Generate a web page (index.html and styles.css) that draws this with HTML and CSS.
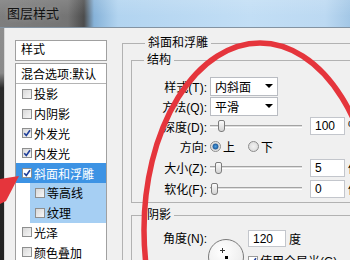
FILE: index.html
```html
<!DOCTYPE html>
<html lang="zh-CN">
<head>
    <meta charset="UTF-8">
    <title>图层样式</title>
    <link rel="stylesheet" href="styles.css">
</head>
<body>
<div class="window">
    <div class="titlebar"><span class="title">图层样式</span></div>
    <div class="frame">
        <div class="frame-edge"></div>
        <div class="dialog">
            <!-- left list of effects -->
            <div class="styles-panel">
                <div class="panel-head">样式</div>
                <ul class="style-list">
                    <li class="blend">混合选项:默认</li>
                    <li><span class="check"></span>投影</li>
                    <li><span class="check"></span>内阴影</li>
                    <li><span class="check"><svg viewBox="0 0 8 8"><path d="M1.2 4.2 L3.3 6.4 L7 1.2"/></svg></span>外发光</li>
                    <li><span class="check"><svg viewBox="0 0 8 8"><path d="M1.2 4.2 L3.3 6.4 L7 1.2"/></svg></span>内发光</li>
                    <li class="selected"><span class="check"><svg viewBox="0 0 8 8"><path d="M1.2 4.2 L3.3 6.4 L7 1.2"/></svg></span>斜面和浮雕</li>
                    <li class="sub"><span class="check"></span>等高线</li>
                    <li class="sub"><span class="check"></span>纹理</li>
                    <li><span class="check"></span>光泽</li>
                    <li><span class="check"></span>颜色叠加</li>
                </ul>
            </div>

            <!-- bevel and emboss options -->
            <div class="options">
                <fieldset class="group outer">
                    <legend>斜面和浮雕</legend>
                    <fieldset class="group inner">
                        <legend>结构</legend>
                        <div class="form-grid">
                            <label>样式(T):</label>
                            <div class="dropdown"><span>内斜面</span><span class="arrow"></span></div>

                            <label>方法(Q):</label>
                            <div class="dropdown"><span>平滑</span><span class="arrow"></span></div>

                            <label>深度(D):</label>
                            <div class="control">
                                <div class="slider"><div class="track"></div><div class="thumb" style="left: 8px"></div></div>
                                <div class="num">100</div><span class="unit">%</span>
                            </div>

                            <label>方向:</label>
                            <div class="control">
                                <span class="radio on"></span><span class="radio-text">上</span>
                                <span class="radio second"></span><span class="radio-text">下</span>
                            </div>

                            <label>大小(Z):</label>
                            <div class="control">
                                <div class="slider"><div class="track"></div><div class="thumb" style="left: 5px"></div></div>
                                <div class="num">5</div><span class="unit">像素</span>
                            </div>

                            <label>软化(F):</label>
                            <div class="control">
                                <div class="slider"><div class="track"></div><div class="thumb" style="left: 1px"></div></div>
                                <div class="num">0</div><span class="unit">像素</span>
                            </div>
                        </div>
                    </fieldset>

                    <fieldset class="group inner shadow">
                        <legend>阴影</legend>
                        <div class="shadow-row">
                            <label>角度(N):</label>
                            <div class="dial"><span class="cross"></span><span class="center"></span></div>
                            <div class="angle">
                                <div class="angle-line"><div class="num wide">120</div><span class="unit">度</span></div>
                                <div class="global"><span class="check"><svg viewBox="0 0 8 8"><path d="M1.2 4.2 L3.3 6.4 L7 1.2"/></svg></span>使用全局光(G)</div>
                            </div>
                        </div>
                    </fieldset>
                </fieldset>
            </div>
        </div>
    </div>

    <!-- red marks drawn over the screenshot -->
    <svg class="marks" viewBox="0 0 350 260">
        <ellipse cx="260" cy="230" rx="116" ry="187"/>
        <polygon points="19,176 0,179 0,204 6,201"/>
    </svg>
</div>
</body>
</html>
```

FILE: styles.css
```css
* {
    box-sizing: border-box;
}
body {
    margin: 0;
    font-family: "Liberation Sans", "Noto Sans CJK SC", sans-serif;
    font-size: 12px;
    color: #000;
    background: #f0f0f0;
}
.window {
    position: relative;
    width: 350px;
    height: 260px;
    overflow: hidden;
    background: #f0f0f0;
}
.titlebar {
    height: 28px;
    padding-left: 7px;
    line-height: 27px;
    font-size: 13px;
    color: #111;
    background:
        linear-gradient(to bottom, rgba(255, 255, 255, 0.12), rgba(255, 255, 255, 0) 60%),
        linear-gradient(to right, #7e7e7e 0, #747474 68px, #4c4c4c 84px, #86b2d8 94px, #b2d4f0 118px, #c2def5 250px, #bcd9f2 325px, #a3c7e6 350px);
    border-bottom: 1px solid #8393a2;
}
.title {
    text-shadow: 0 0 5px rgba(255, 255, 255, 0.25);
}
.frame {
    display: flex;
    height: 232px;
}
.frame-edge {
    flex: none;
    width: 5px;
    background:
        linear-gradient(to right, rgba(255, 255, 255, 0) 4px, #d8d8d8 4px),
        linear-gradient(to bottom, #8e8e8e 0, #8a8a8a 45px, #2a2a2a 60px, #222 100%);
}
.dialog {
    flex: 1;
    min-width: 0;
    overflow: hidden;
    display: flex;
    align-items: flex-start;
    padding-left: 10px;
    background: #f0f0f0;
}

/* effect list */
.styles-panel {
    width: 92px;
    margin-top: 12px;
    flex: none;
}
.panel-head {
    height: 21px;
    padding-left: 5px;
    line-height: 19px;
    background: #fff;
    border: 1px solid #a0a0a0;
}
.style-list {
    list-style: none;
    margin: 2px 0 0;
    padding: 0;
    background: #fff;
    border: 1px solid #a0a0a0;
    border-bottom: none;
}
.style-list li {
    display: flex;
    align-items: center;
    height: 19.8px;
    padding-left: 6px;
    white-space: nowrap;
}
.style-list li.blend {
    height: 20px;
    padding-left: 5px;
    border-bottom: 1px solid #b4b4b4;
}
.style-list li.selected {
    background: #3d93e4;
    color: #fff;
}
.style-list li.sub {
    padding-left: 19px;
    background: linear-gradient(to right, #fff 14px, #a6cff3 14px);
}
.check {
    display: inline-flex;
    align-items: center;
    justify-content: center;
    width: 10px;
    height: 10px;
    margin-right: 2px;
    border: 1px solid #8e8f8f;
    background: linear-gradient(135deg, #d8d8d8, #f7f7f7);
    flex: none;
}
.selected .check {
    background: #fff;
}
.check svg {
    width: 8px;
    height: 8px;
    fill: none;
    stroke: #21409a;
    stroke-width: 1.6;
}

/* option groups */
.options {
    margin-left: 15px;
    flex: none;
}
.group {
    margin: 0;
    padding: 0;
    min-width: 0;
    border: 1px solid #b2b2b2;
}
.group legend {
    margin-left: 14px;
    padding: 0 3px;
    line-height: 14px;
}
.outer {
    width: 250px;
    margin-top: 8px;
    padding-left: 8px;
    height: 240px;
}
.inner {
    width: 236px;
    margin-top: 3px;
    padding-bottom: 3px;
}
.inner legend {
    margin-left: 12px;
}
.inner.shadow {
    margin-top: 5px;
}
.form-grid {
    display: grid;
    grid-template-columns: 75px 1fr;
    grid-template-rows: 20px 20px 20px 21px 21px 21px;
    column-gap: 3px;
    margin-top: 9px;
    align-items: center;
}
.form-grid label {
    text-align: right;
    white-space: nowrap;
}
.dropdown {
    display: flex;
    align-items: center;
    justify-content: space-between;
    width: 68px;
    height: 19px;
    padding: 0 4px;
    background: #fff;
    border: 1px solid #b9bcc2;
}
.arrow {
    width: 0;
    height: 0;
    border-left: 4px solid transparent;
    border-right: 4px solid transparent;
    border-top: 4px solid #000;
}
.control {
    display: flex;
    align-items: center;
}
.slider {
    position: relative;
    width: 92px;
    height: 14px;
    display: flex;
    align-items: center;
}
.track {
    width: 100%;
    height: 3px;
    background: #dedede;
    border-top: 1px solid #a3a3a3;
    border-bottom: 1px solid #fff;
}
.thumb {
    position: absolute;
    top: 1px;
    width: 7px;
    height: 12px;
    border: 1px solid #7c7c7c;
    border-radius: 2px 2px 3px 3px;
    background: linear-gradient(#fbfbfb, #d4d4d4);
}
.num {
    width: 35px;
    height: 18px;
    margin-left: 8px;
    padding-left: 4px;
    line-height: 16px;
    background: #fff;
    border: 1px solid #c3c6cc;
}
.unit {
    margin-left: 3px;
    white-space: nowrap;
}
.radio {
    width: 11px;
    height: 11px;
    border-radius: 50%;
    border: 1px solid #8c8c8c;
    background: radial-gradient(circle, #f2f2f2, #d6d6d6);
    flex: none;
}
.radio.on {
    background: radial-gradient(circle, #4d9fe0 0, #1f5d9e 2.6px, #d4d4d4 3.3px, #f6f6f6 5px);
}
.radio.second {
    margin-left: 13px;
}
.radio-text {
    margin-left: 2px;
}

/* shadow group */
.shadow-row {
    display: flex;
    align-items: flex-start;
    padding-top: 8px;
    height: 40px;
}
.shadow-row label {
    width: 75px;
    height: 18px;
    line-height: 18px;
    text-align: right;
    flex: none;
}
.dial {
    position: relative;
    width: 36px;
    height: 36px;
    margin: 9px 0 0 1px;
    border-radius: 50%;
    border: 1px solid #7a7a7a;
    background: radial-gradient(circle at 40% 35%, #fff, #e6e6e6);
    flex: none;
}
.cross {
    position: absolute;
    left: 11px;
    top: 8px;
    width: 5px;
    height: 5px;
    background: linear-gradient(#333, #333) center / 5px 1px no-repeat,
        linear-gradient(#333, #333) center / 1px 5px no-repeat;
}
.center {
    position: absolute;
    left: 16px;
    top: 16px;
    width: 3px;
    height: 3px;
    background: #000;
}
.angle {
    margin-left: 4px;
}
.angle-line {
    display: flex;
    align-items: center;
}
.num.wide {
    width: 38px;
    height: 17px;
    margin-left: 0;
}
.global {
    display: flex;
    align-items: center;
    margin-top: 5px;
    white-space: nowrap;
}
.global .check {
    background: #fff;
    border-color: #9a9a9a;
}

.marks {
    position: absolute;
    top: 0;
    left: 0;
    width: 350px;
    height: 260px;
    pointer-events: none;
}
.marks ellipse {
    fill: none;
    stroke: #e5353c;
    stroke-width: 5.5;
}
.marks polygon {
    fill: #e5353c;
}
```
